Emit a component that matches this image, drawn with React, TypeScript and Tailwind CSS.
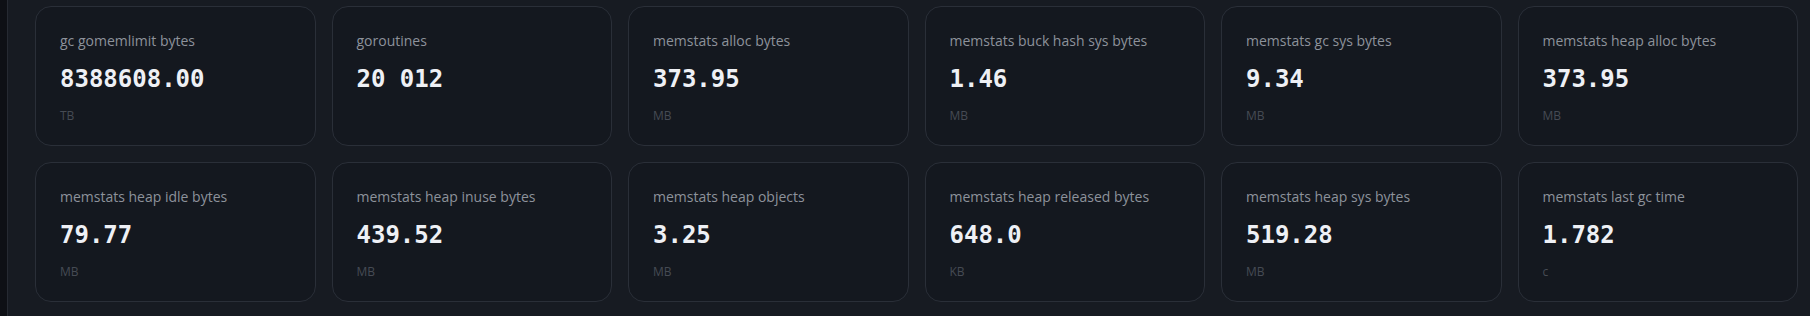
import React from 'react';

type Metric = { label: string; value: string; unit?: string };

const metrics: Metric[] = [
  { label: 'gc gomemlimit bytes', value: '8388608.00', unit: 'TB' },
  { label: 'goroutines', value: '20 012' },
  { label: 'memstats alloc bytes', value: '373.95', unit: 'MB' },
  { label: 'memstats buck hash sys bytes', value: '1.46', unit: 'MB' },
  { label: 'memstats gc sys bytes', value: '9.34', unit: 'MB' },
  { label: 'memstats heap alloc bytes', value: '373.95', unit: 'MB' },
  { label: 'memstats heap idle bytes', value: '79.77', unit: 'MB' },
  { label: 'memstats heap inuse bytes', value: '439.52', unit: 'MB' },
  { label: 'memstats heap objects', value: '3.25', unit: 'MB' },
  { label: 'memstats heap released bytes', value: '648.0', unit: 'KB' },
  { label: 'memstats heap sys bytes', value: '519.28', unit: 'MB' },
  { label: 'memstats last gc time', value: '1.782', unit: 'c' },
];

const MetricCard: React.FC<{ metric: Metric }> = ({ metric }) => (
  <div className="h-[140px] rounded-2xl border border-[#2a2f38] bg-[#14181f] px-6 pt-6">
    <div className="text-sm leading-5 text-[#8d929b] font-['Open_Sans',sans-serif]">{metric.label}</div>
    <div className="mt-3 text-2xl leading-8 font-bold text-[#eef0f5] font-['DejaVu_Sans_Mono',monospace]">
      {metric.value}
    </div>
    {metric.unit && (
      <div className="mt-[13px] text-xs leading-4 text-[#464b54] font-['Open_Sans',sans-serif]">{metric.unit}</div>
    )}
  </div>
);

const App: React.FC = () => {
  return (
    <div className="flex h-[316px] w-full overflow-hidden bg-[#171b22]">
      <div className="w-[7px] shrink-0 bg-[#0e1015]" />
      <div className="flex-1 border-l border-[#262a32] pl-[27px] pr-[12px] pt-[6px]">
        <div className="grid grid-cols-6 gap-x-4 gap-y-4">
          {metrics.map((m) => (
            <MetricCard key={m.label} metric={m} />
          ))}
        </div>
      </div>
    </div>
  );
};

export default App;
